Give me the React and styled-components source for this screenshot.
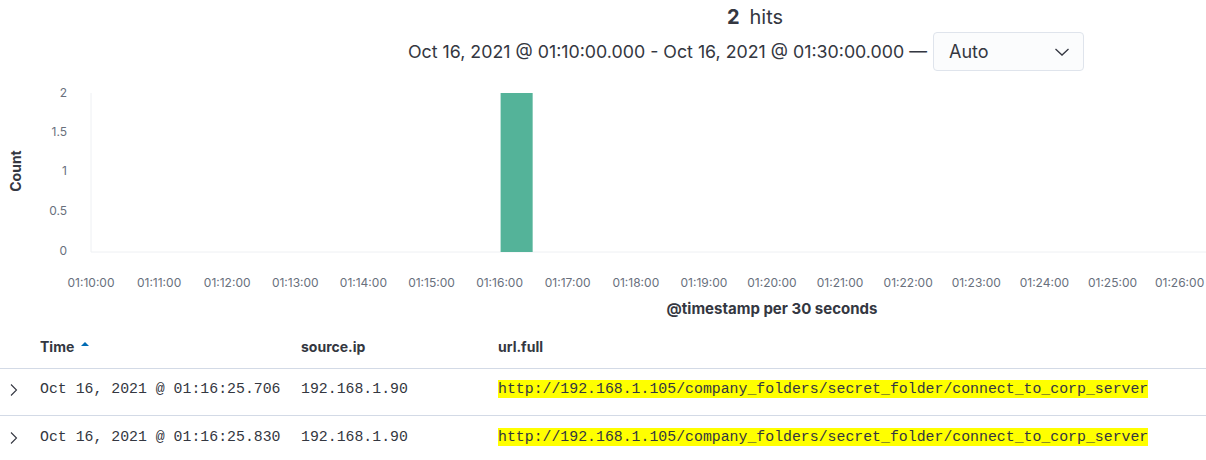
import styled, { createGlobalStyle } from "styled-components";

const Global = createGlobalStyle`
  html, body {
    margin: 0;
    padding: 0;
    background: #fff;
    overflow: hidden;
  }
  body {
    font-family: Inter, "Noto Sans", sans-serif;
    color: #343741;
  }
`;

const Page = styled.div`
  width: 1510px;
`;

const Header = styled.div`
  display: flex;
  flex-direction: column;
  align-items: center;
  padding-top: 4px;
`;

const Hits = styled.div`
  font-size: 20px;
  line-height: 26px;
  height: 26px;
  strong {
    font-weight: 700;
    margin-right: 10px;
  }
`;

const RangeRow = styled.div`
  display: flex;
  align-items: center;
  gap: 6px;
  margin-top: 2px;
  margin-left: -18px;
  font-size: 17.8px;
`;

const Select = styled.div`
  box-sizing: border-box;
  width: 151px;
  height: 39px;
  display: flex;
  align-items: center;
  justify-content: space-between;
  padding: 0 13px 0 15px;
  border: 1px solid #dfe4ec;
  border-radius: 4px;
  background: #fbfcfd;
  font-size: 18px;
`;

const Chart = styled.svg`
  display: block;
  margin-top: 9px;
`;

const Table = styled.div`
  display: grid;
  grid-template-columns: 40px 261px 197px 1fr;
`;

const HeadCell = styled.div`
  box-sizing: border-box;
  height: 49px;
  padding-top: 18px;
  line-height: 18px;
  font-size: 14px;
  font-weight: 700;
  border-bottom: 1px solid #d3dae6;
  display: flex;
  align-items: flex-start;
  gap: 7px;
`;

const Cell = styled.div`
  box-sizing: border-box;
  height: 47px;
  padding-top: ${(p) => (p.$last ? 12 : 11)}px;
  line-height: 18px;
  font-family: "Liberation Mono", "DejaVu Sans Mono", monospace;
  font-size: 14.85px;
  color: #343741;
  border-bottom: ${(p) => (p.$last ? "none" : "1px solid #d3dae6")};
  white-space: nowrap;
`;

const Toggle = styled(Cell)`
  padding-left: 9px;
  padding-top: ${(p) => (p.$last ? 15 : 14)}px;
`;

const Mark = styled.mark`
  background: #ffff00;
  color: #343741;
  padding: 1px 0;
`;

const ticks = Array.from({ length: 17 }, (_, i) => i);
const yLabels = [
  ["2", 13],
  ["1.5", 52],
  ["1", 91],
  ["0.5", 131],
  ["0", 171],
];
const step = 68.1;
const x0 = 91;

const rows = [
  { time: "Oct 16, 2021 @ 01:16:25.706", ip: "192.168.1.90" },
  { time: "Oct 16, 2021 @ 01:16:25.830", ip: "192.168.1.90" },
];
const url = "http://192.168.1.105/company_folders/secret_folder/connect_to_corp_server";

const Chevron = () => (
  <svg width="10" height="14" viewBox="0 0 10 14">
    <polyline points="2,1.5 7.5,7 2,12.5" fill="none" stroke="#343741" strokeWidth="1.1" />
  </svg>
);

export default function App() {
  return (
    <Page>
      <Global />
      <Header>
        <Hits>
          <strong>2</strong>hits
        </Hits>
        <RangeRow>
          <span>Oct 16, 2021 @ 01:10:00.000 - Oct 16, 2021 @ 01:30:00.000 —</span>
          <Select>
            Auto
            <svg width="16" height="10" viewBox="0 0 16 10">
              <polyline points="1.5,2 8,8 14.5,2" fill="none" stroke="#343741" strokeWidth="1.3" />
            </svg>
          </Select>
        </RangeRow>
      </Header>

      <Chart width="1510" height="240" viewBox="0 0 1510 240">
        <line x1={x0} y1="13" x2={x0} y2="172" stroke="#eef0f3" />
        <line x1={x0} y1="172" x2="1510" y2="172" stroke="#eef0f3" />
        <text
          transform="translate(21 91) rotate(-90)"
          textAnchor="middle"
          fontSize="14"
          fontWeight="700"
          fill="#343741"
        >
          Count
        </text>
        {yLabels.map(([t, y]) => (
          <text key={t} x="67" y={y + 4} textAnchor="end" fontSize="12" fill="#69707d">
            {t}
          </text>
        ))}
        <rect x={x0 + 6 * step + 1} y="13" width={step / 2 - 2} height="159" fill="#54b399" />
        {ticks.map((i) => {
          const m = 10 + i;
          const label = `01:${String(m).padStart(2, "0")}:00`;
          return (
            <text key={i} x={x0 + i * step - (i === 16 ? 1 : 0)} y="207" textAnchor="middle" fontSize="12" fill="#69707d">
              {label}
            </text>
          );
        })}
        <text x={x0 + 10 * step} y="234" textAnchor="middle" fontSize="15" fontWeight="700" fill="#343741">
          @timestamp per 30 seconds
        </text>
      </Chart>

      <Table>
        <HeadCell />
        <HeadCell>
          Time
          <svg width="8" height="14" viewBox="0 0 8 14">
            <polygon points="0,8 4,4 8,8" fill="#006bb4" />
          </svg>
        </HeadCell>
        <HeadCell>source.ip</HeadCell>
        <HeadCell>url.full</HeadCell>
        {rows.map((r, i) => {
          const last = i === rows.length - 1;
          return [
            <Toggle key={`c${i}`} $last={last}>
              <Chevron />
            </Toggle>,
            <Cell key={`t${i}`} $last={last}>{r.time}</Cell>,
            <Cell key={`i${i}`} $last={last}>{r.ip}</Cell>,
            <Cell key={`u${i}`} $last={last}>
              <Mark>{url}</Mark>
            </Cell>,
          ];
        })}
      </Table>
    </Page>
  );
}
